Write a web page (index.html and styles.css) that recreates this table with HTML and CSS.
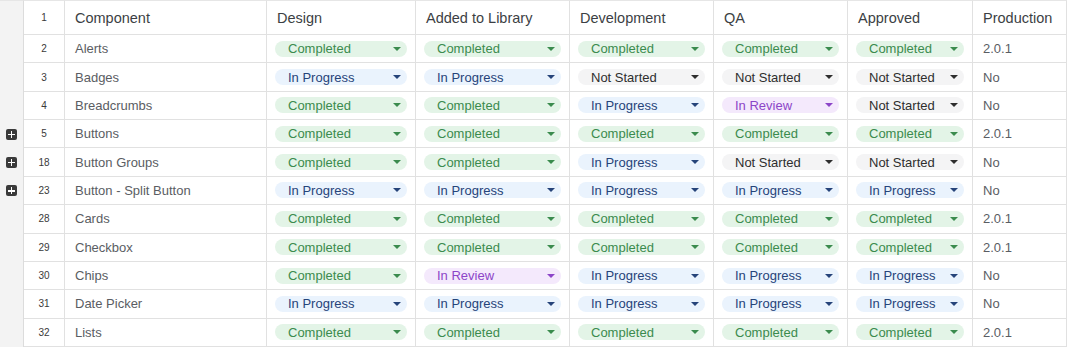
FILE: index.html
```html
<!DOCTYPE html>
<html>
<head>
<meta charset="utf-8">
<link rel="stylesheet" href="styles.css">
</head>
<body>
<div class="sheet">
  <div class="row head">
    <div class="gut"></div>
    <div class="num">1</div>
    <div class="txt">Component</div>
    <div class="txt">Design</div>
    <div class="txt">Added to Library</div>
    <div class="txt">Development</div>
    <div class="txt">QA</div>
    <div class="txt">Approved</div>
    <div class="txt">Production</div>
  </div>

  <div class="row">
    <div class="gut"></div>
    <div class="num">2</div>
    <div class="txt">Alerts</div>
    <div class="st"><span class="chip done">Completed</span></div>
    <div class="st"><span class="chip done">Completed</span></div>
    <div class="st"><span class="chip done">Completed</span></div>
    <div class="st"><span class="chip done">Completed</span></div>
    <div class="st"><span class="chip done">Completed</span></div>
    <div class="txt">2.0.1</div>
  </div>

  <div class="row">
    <div class="gut"></div>
    <div class="num">3</div>
    <div class="txt">Badges</div>
    <div class="st"><span class="chip prog">In Progress</span></div>
    <div class="st"><span class="chip prog">In Progress</span></div>
    <div class="st"><span class="chip none">Not Started</span></div>
    <div class="st"><span class="chip none">Not Started</span></div>
    <div class="st"><span class="chip none">Not Started</span></div>
    <div class="txt">No</div>
  </div>

  <div class="row">
    <div class="gut"></div>
    <div class="num">4</div>
    <div class="txt">Breadcrumbs</div>
    <div class="st"><span class="chip done">Completed</span></div>
    <div class="st"><span class="chip done">Completed</span></div>
    <div class="st"><span class="chip prog">In Progress</span></div>
    <div class="st"><span class="chip rev">In Review</span></div>
    <div class="st"><span class="chip none">Not Started</span></div>
    <div class="txt">No</div>
  </div>

  <div class="row">
    <div class="gut"><span class="plus"></span></div>
    <div class="num">5</div>
    <div class="txt">Buttons</div>
    <div class="st"><span class="chip done">Completed</span></div>
    <div class="st"><span class="chip done">Completed</span></div>
    <div class="st"><span class="chip done">Completed</span></div>
    <div class="st"><span class="chip done">Completed</span></div>
    <div class="st"><span class="chip done">Completed</span></div>
    <div class="txt">2.0.1</div>
  </div>

  <div class="row">
    <div class="gut"><span class="plus"></span></div>
    <div class="num">18</div>
    <div class="txt">Button Groups</div>
    <div class="st"><span class="chip done">Completed</span></div>
    <div class="st"><span class="chip done">Completed</span></div>
    <div class="st"><span class="chip prog">In Progress</span></div>
    <div class="st"><span class="chip none">Not Started</span></div>
    <div class="st"><span class="chip none">Not Started</span></div>
    <div class="txt">No</div>
  </div>

  <div class="row">
    <div class="gut"><span class="plus"></span></div>
    <div class="num">23</div>
    <div class="txt">Button - Split Button</div>
    <div class="st"><span class="chip prog">In Progress</span></div>
    <div class="st"><span class="chip prog">In Progress</span></div>
    <div class="st"><span class="chip prog">In Progress</span></div>
    <div class="st"><span class="chip prog">In Progress</span></div>
    <div class="st"><span class="chip prog">In Progress</span></div>
    <div class="txt">No</div>
  </div>

  <div class="row">
    <div class="gut"></div>
    <div class="num">28</div>
    <div class="txt">Cards</div>
    <div class="st"><span class="chip done">Completed</span></div>
    <div class="st"><span class="chip done">Completed</span></div>
    <div class="st"><span class="chip done">Completed</span></div>
    <div class="st"><span class="chip done">Completed</span></div>
    <div class="st"><span class="chip done">Completed</span></div>
    <div class="txt">2.0.1</div>
  </div>

  <div class="row">
    <div class="gut"></div>
    <div class="num">29</div>
    <div class="txt">Checkbox</div>
    <div class="st"><span class="chip done">Completed</span></div>
    <div class="st"><span class="chip done">Completed</span></div>
    <div class="st"><span class="chip done">Completed</span></div>
    <div class="st"><span class="chip done">Completed</span></div>
    <div class="st"><span class="chip done">Completed</span></div>
    <div class="txt">2.0.1</div>
  </div>

  <div class="row">
    <div class="gut"></div>
    <div class="num">30</div>
    <div class="txt">Chips</div>
    <div class="st"><span class="chip done">Completed</span></div>
    <div class="st"><span class="chip rev">In Review</span></div>
    <div class="st"><span class="chip prog">In Progress</span></div>
    <div class="st"><span class="chip prog">In Progress</span></div>
    <div class="st"><span class="chip prog">In Progress</span></div>
    <div class="txt">No</div>
  </div>

  <div class="row">
    <div class="gut"></div>
    <div class="num">31</div>
    <div class="txt">Date Picker</div>
    <div class="st"><span class="chip prog">In Progress</span></div>
    <div class="st"><span class="chip prog">In Progress</span></div>
    <div class="st"><span class="chip prog">In Progress</span></div>
    <div class="st"><span class="chip prog">In Progress</span></div>
    <div class="st"><span class="chip prog">In Progress</span></div>
    <div class="txt">No</div>
  </div>

  <div class="row">
    <div class="gut"></div>
    <div class="num">32</div>
    <div class="txt">Lists</div>
    <div class="st"><span class="chip done">Completed</span></div>
    <div class="st"><span class="chip done">Completed</span></div>
    <div class="st"><span class="chip done">Completed</span></div>
    <div class="st"><span class="chip done">Completed</span></div>
    <div class="st"><span class="chip done">Completed</span></div>
    <div class="txt">2.0.1</div>
  </div>
</div>
</body>
</html>
```

FILE: styles.css
```css
* { box-sizing: border-box; }
html, body { margin: 0; padding: 0; background: #ffffff; }
body {
  font-family: "Liberation Sans", Arial, Helvetica, sans-serif;
  width: 1068px;
  height: 348px;
  overflow: hidden;
}
.sheet {
  display: flex;
  flex-direction: column;
  width: 1067px;
}
.row {
  display: grid;
  grid-template-columns: 24px 41px 202px 149px 154px 144px 134px 125px 94px;
  height: 28.36px;
}
.row.head { height: 35px; }
.row > div {
  border-right: 1px solid #e1e1e1;
  border-bottom: 1px solid #e1e1e1;
  display: flex;
  align-items: center;
  min-width: 0;
}
.row.head > div { border-top: 1px solid #e6e6e6; }
.row > .gut {
  background: #f3f3f3;
  border-bottom: none;
  border-right: 1px solid #dcdcdc;
  border-top: none;
  padding-left: 6px;
}
.num {
  justify-content: center;
  font-size: 10px;
  color: #3a3a3a;
}
.txt {
  padding-left: 10px;
  font-size: 13px;
  color: #5a5d63;
  white-space: nowrap;
}
.head .txt {
  font-size: 14.5px;
  color: #3c3f44;
}
.st {
  padding: 0 8px;
}
.chip {
  position: relative;
  display: flex;
  align-items: center;
  width: 100%;
  height: 16px;
  border-radius: 8px;
  padding-left: 13px;
  font-size: 13px;
  white-space: nowrap;
}
.chip::after {
  content: "";
  position: absolute;
  right: 6px;
  top: 6px;
  width: 0;
  height: 0;
  border-left: 4px solid transparent;
  border-right: 4px solid transparent;
  border-top: 4px solid currentColor;
}
.done { background: #e3f4e7; color: #3b8b4e; }
.prog { background: #eaf3fd; color: #26447a; }
.none { background: #f4f4f5; color: #2e2e2e; }
.rev  { background: #f4e9fc; color: #8c45c8; }
.plus {
  position: relative;
  width: 11px;
  height: 11px;
  border-radius: 2px;
  background: #3a3a3a;
}
.plus::before, .plus::after {
  content: "";
  position: absolute;
  background: #ffffff;
}
.plus::before { left: 2px; right: 2px; top: 4.75px; height: 1.5px; }
.plus::after { top: 2px; bottom: 2px; left: 4.75px; width: 1.5px; }
```
